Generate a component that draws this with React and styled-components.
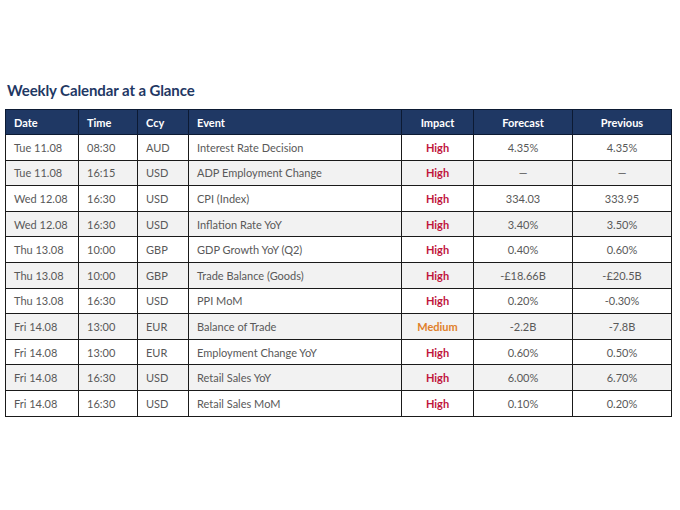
import styled, { createGlobalStyle } from "styled-components"

const Global = createGlobalStyle`
  html, body {
    margin: 0;
    padding: 0;
    background: #ffffff;
  }
  body {
    font-family: Lato, "Open Sans", sans-serif;
  }
`

const Page = styled.div`
  width: 680px;
  height: 510px;
  padding: 81px 9px 0 5px;
  box-sizing: border-box;
`

const Title = styled.h2`
  margin: 0 0 9px 2px;
  font-size: 15px;
  font-weight: 700;
  color: #1f3864;
  letter-spacing: -0.1px;
  line-height: 19px;
`

const Table = styled.table`
  width: 666px;
  border-collapse: collapse;
  table-layout: fixed;
  font-size: 11px;
  border: 1.5px solid #111;
`

const Head = styled.th`
  background: #1f3864;
  color: #ffffff;
  font-weight: 700;
  height: 25px;
  padding: 0 0 0 ${p => (p.$center ? 0 : 8)}px;
  text-align: ${p => (p.$center ? "center" : "left")};
  border: 1px solid #0c1a33;
  box-sizing: border-box;
`

const Row = styled.tr`
  background: ${p => (p.$alt ? "#f2f2f2" : "#ffffff")};
`

const Cell = styled.td`
  height: 25.6px;
  padding: 0 0 0 ${p => (p.$center ? 0 : 8)}px;
  text-align: ${p => (p.$center ? "center" : "left")};
  color: #595959;
  border: 1px solid #1a1a1a;
  white-space: nowrap;
  box-sizing: border-box;
`

const Impact = styled(Cell)`
  font-weight: 700;
  color: ${p => (p.$level === "Medium" ? "#e0802a" : "#c0143c")};
`

const cols = [
  { label: "Date", w: 73 },
  { label: "Time", w: 59 },
  { label: "Ccy", w: 51 },
  { label: "Event", w: 213 },
  { label: "Impact", w: 72, center: true },
  { label: "Forecast", w: 99, center: true },
  { label: "Previous", w: 99, center: true },
]

const rows = [
  ["Tue 11.08", "08:30", "AUD", "Interest Rate Decision", "High", "4.35%", "4.35%"],
  ["Tue 11.08", "16:15", "USD", "ADP Employment Change", "High", "\u2014", "\u2014"],
  ["Wed 12.08", "16:30", "USD", "CPI (Index)", "High", "334.03", "333.95"],
  ["Wed 12.08", "16:30", "USD", "Inflation Rate YoY", "High", "3.40%", "3.50%"],
  ["Thu 13.08", "10:00", "GBP", "GDP Growth YoY (Q2)", "High", "0.40%", "0.60%"],
  ["Thu 13.08", "10:00", "GBP", "Trade Balance (Goods)", "High", "-\u00a318.66B", "-\u00a320.5B"],
  ["Thu 13.08", "16:30", "USD", "PPI MoM", "High", "0.20%", "-0.30%"],
  ["Fri 14.08", "13:00", "EUR", "Balance of Trade", "Medium", "-2.2B", "-7.8B"],
  ["Fri 14.08", "13:00", "EUR", "Employment Change YoY", "High", "0.60%", "0.50%"],
  ["Fri 14.08", "16:30", "USD", "Retail Sales YoY", "High", "6.00%", "6.70%"],
  ["Fri 14.08", "16:30", "USD", "Retail Sales MoM", "High", "0.10%", "0.20%"],
]

export default function App() {
  return (
    <>
      <Global />
      <Page>
        <Title>Weekly Calendar at a Glance</Title>
        <Table>
          <colgroup>
            {cols.map(c => (
              <col key={c.label} style={{ width: c.w }} />
            ))}
          </colgroup>
          <thead>
            <tr>
              {cols.map(c => (
                <Head key={c.label} $center={c.center}>
                  {c.label}
                </Head>
              ))}
            </tr>
          </thead>
          <tbody>
            {rows.map((r, i) => (
              <Row key={i} $alt={i % 2 === 1}>
                <Cell>{r[0]}</Cell>
                <Cell>{r[1]}</Cell>
                <Cell>{r[2]}</Cell>
                <Cell>{r[3]}</Cell>
                <Impact $center $level={r[4]}>{r[4]}</Impact>
                <Cell $center>{r[5]}</Cell>
                <Cell $center>{r[6]}</Cell>
              </Row>
            ))}
          </tbody>
        </Table>
      </Page>
    </>
  )
}
